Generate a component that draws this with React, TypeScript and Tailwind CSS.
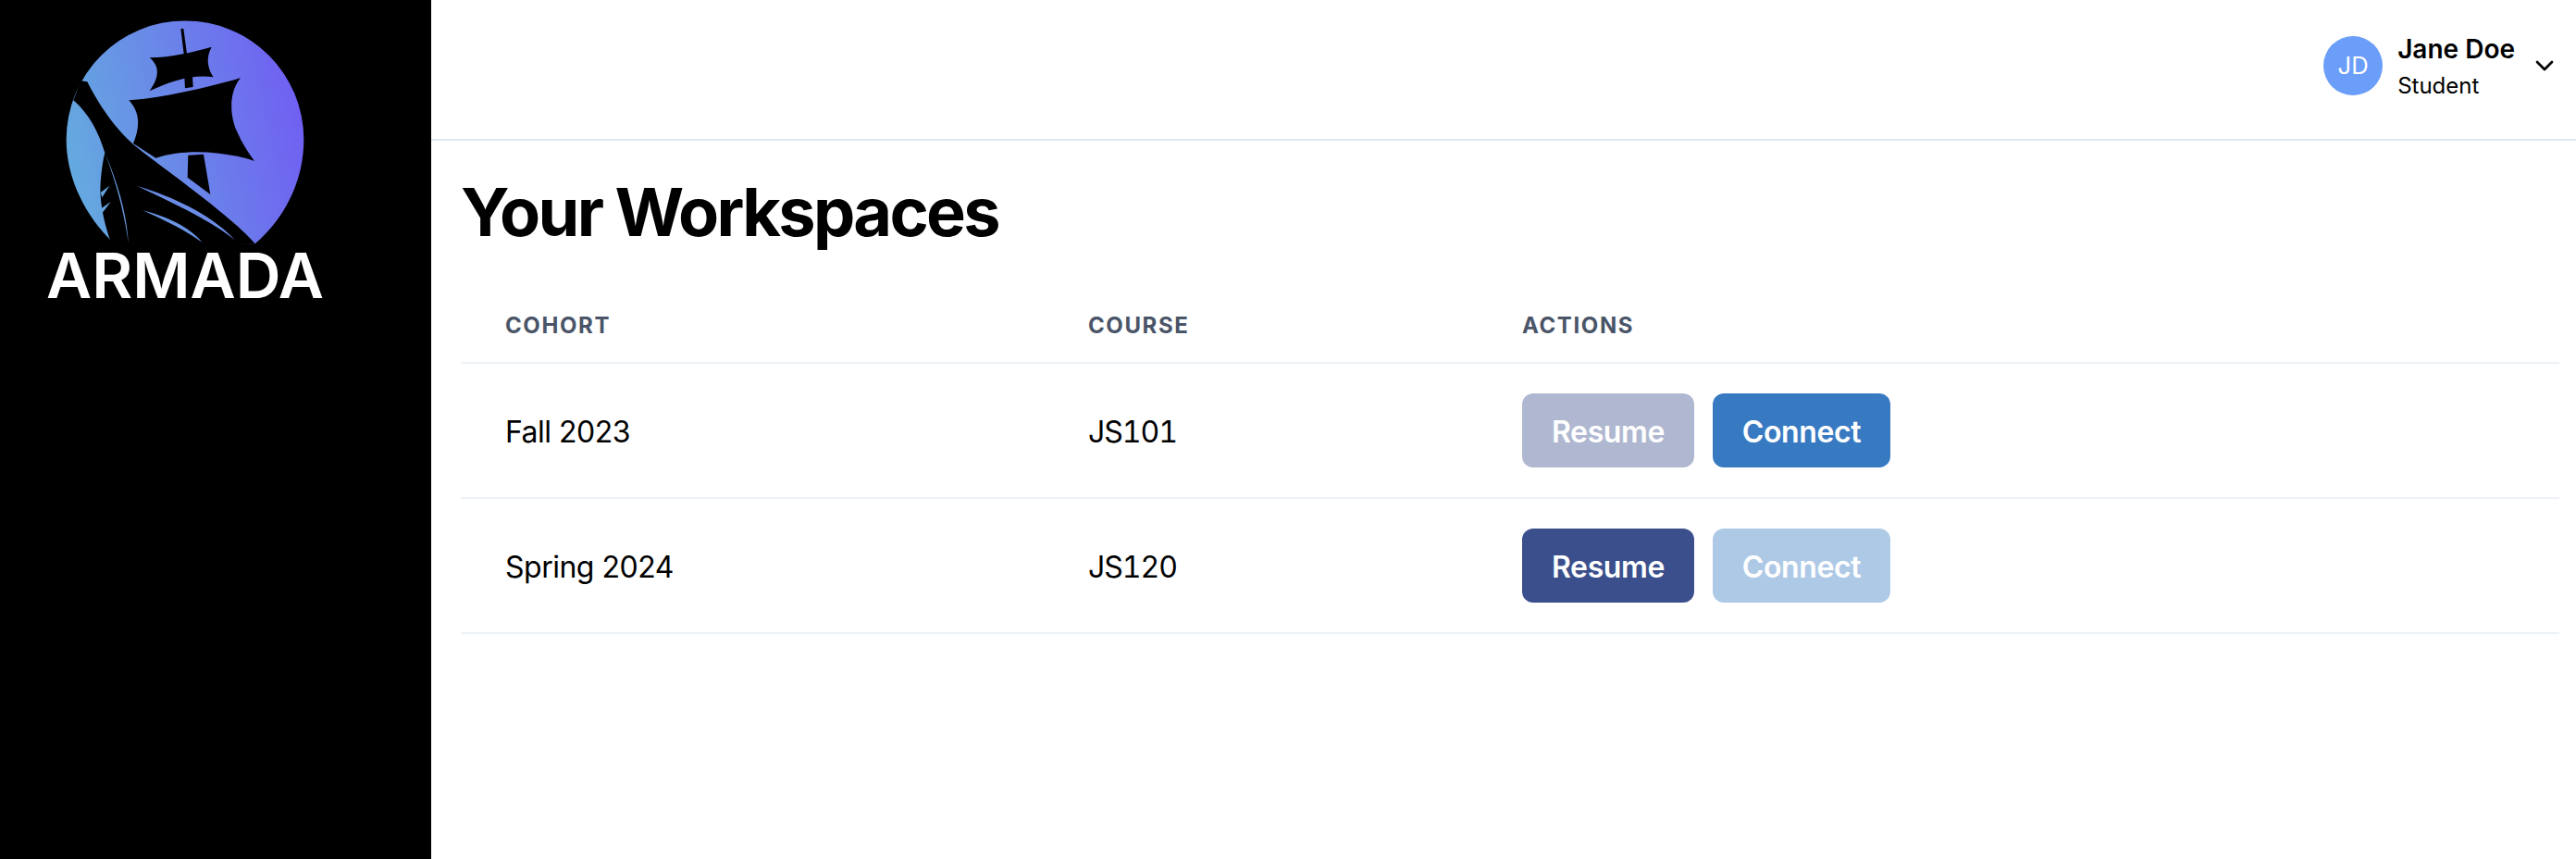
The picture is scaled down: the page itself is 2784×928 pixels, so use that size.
import React from "react";
import { ChevronDown } from "lucide-react";

const ArmadaLogo = () => (
  <svg viewBox="0 0 1398 1050" className="block w-[466px] h-[350px]">
    <defs>
      <linearGradient id="moon" gradientUnits="userSpaceOnUse" x1="215" y1="560" x2="985" y2="400">
        <stop offset="0" stopColor="#64ABDF" />
        <stop offset="1" stopColor="#7060F2" />
      </linearGradient>
    </defs>
    <path
      d="M362 782 C270 690 215 570 215 452 A385 385 0 0 1 985 452 C985 590 920 710 827 790 Z"
      fill="url(#moon)"
    />
    {/* hull */}
    <path
      d="M262 262 L283 265 C320 340 380 425 435 470 C520 540 740 690 827 790 L362 792 C335 720 320 640 327 580 C330 545 335 515 340 495 C320 430 290 370 238 325 Z"
      fill="#000"
    />
    <path d="M340 495 C385 600 412 700 416 788 C405 700 380 600 340 495 Z" fill="#6A9BE3" />
    <path d="M326 624 L355 602 L331 640 Z M328 676 L359 654 L332 690 Z" fill="#65A3E0" />
    <path d="M445 603 C570 640 690 700 762 778 C680 712 560 658 445 603 Z" fill="#6B8CE6" />
    <path d="M463 682 C540 700 620 740 656 786 C600 745 530 712 463 682 Z" fill="#6A94E4" />
    {/* sails and mast */}
    <path
      d="M418 325 C540 315 660 285 780 253 C740 300 745 380 770 430 C785 465 805 495 825 522 C730 490 600 480 505 512 L432 465 C450 420 460 370 418 325 Z"
      fill="#000"
    />
    <path
      d="M485 187 C560 185 620 170 686 152 C665 190 675 225 692 250 C620 240 550 265 485 295 C510 260 525 220 485 187 Z"
      fill="#000"
    />
    <path d="M586 93 L595 93 L606 175 L596 175 Z M598 250 L624 246 L626 282 L600 286 Z" fill="#000" />
    <path d="M610 503 L660 500 L682 630 L608 575 Z" fill="#000" />
    <text
      x="150"
      y="965"
      textLength="900"
      lengthAdjust="spacingAndGlyphs"
      fill="#fff"
      fontSize="203"
      fontWeight="600"
      fontFamily="Inter, sans-serif"
    >
      ARMADA
    </text>
  </svg>
);

const workspaces = [
  { cohort: "Fall 2023", course: "JS101", resumeOff: true, connectOff: false },
  { cohort: "Spring 2024", course: "JS120", resumeOff: false, connectOff: true },
];

const App = () => {
  return (
    <div className="flex min-h-screen bg-white text-black font-['Inter',sans-serif]">
      <aside className="w-[466px] shrink-0 bg-black">
        <ArmadaLogo />
      </aside>
      <div className="flex-1 min-w-0">
        <header className="h-[152px] border-b-2 border-[#e2e8f0] flex items-center justify-end pr-[18px] pb-2">
          <div className="flex items-center">
            <div className="w-16 h-16 rounded-full bg-[#6b9ef8] flex items-center justify-center text-white text-[25.6px] leading-none">
              JD
            </div>
            <div className="ml-4 flex flex-col">
              <span className="text-[28px] leading-[42px] font-semibold">Jane Doe</span>
              <span className="text-[24px] leading-[36px] mt-[1px]">Student</span>
            </div>
            <ChevronDown className="ml-[16px] w-8 h-8" strokeWidth={2} />
          </div>
        </header>
        <main className="pt-[34px] pl-8 pr-[18px]">
          <h1 className="text-[72px] leading-[86px] font-bold tracking-[-2.7px] mb-[39px]">Your Workspaces</h1>
          <table className="w-full table-fixed">
            <thead>
              <tr className="border-b-2 border-[#edf2f7]">
                <th className="w-[630px] pl-12 pt-[25px] pb-[23px] text-left text-[24px] leading-8 font-bold uppercase tracking-[1.6px] text-[#4a5568]">
                  Cohort
                </th>
                <th className="w-[469px] pl-12 pt-[25px] pb-[23px] text-left text-[24px] leading-8 font-bold uppercase tracking-[1.6px] text-[#4a5568]">
                  Course
                </th>
                <th className="pl-12 pt-[25px] pb-[23px] text-left text-[24px] leading-8 font-bold uppercase tracking-[1.6px] text-[#4a5568]">
                  Actions
                </th>
              </tr>
            </thead>
            <tbody>
              {workspaces.map((w) => (
                <tr key={w.cohort} className="border-b-2 border-[#edf2f7]">
                  <td className="pl-12 pt-[34px] pb-[30px] text-[32px] tracking-[-0.5px]">{w.cohort}</td>
                  <td className="pl-12 pt-[34px] pb-[30px] text-[32px] tabular-nums tracking-[-1px]">{w.course}</td>
                  <td className="pl-12 py-8">
                    <div className="flex gap-5">
                      <button
                        disabled={w.resumeOff}
                        className={
                          w.resumeOff
                            ? "h-20 w-[186px] pt-[3px] rounded-xl bg-[#3a4f8c] opacity-40 text-white text-[32px] font-semibold tracking-[-0.4px]"
                            : "h-20 w-[186px] pt-[3px] rounded-xl bg-[#3a4f8c] text-white text-[32px] font-semibold tracking-[-0.4px]"
                        }
                      >
                        Resume
                      </button>
                      <button
                        disabled={w.connectOff}
                        className={
                          w.connectOff
                            ? "h-20 w-[192px] pt-[3px] rounded-xl bg-[#387ac2] opacity-40 text-white text-[32px] font-semibold tracking-[-0.4px]"
                            : "h-20 w-[192px] pt-[3px] rounded-xl bg-[#387ac2] text-white text-[32px] font-semibold tracking-[-0.4px]"
                        }
                      >
                        Connect
                      </button>
                    </div>
                  </td>
                </tr>
              ))}
            </tbody>
          </table>
        </main>
      </div>
    </div>
  );
};

export default App;
